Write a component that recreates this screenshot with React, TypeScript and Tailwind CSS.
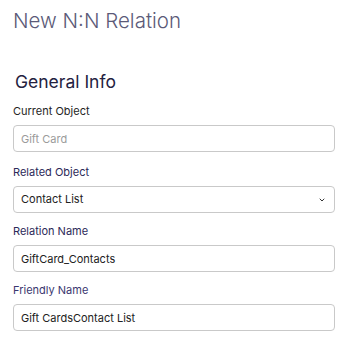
import { ChevronDown } from "lucide-react";

function Field({ label, labelColor, className = "", children }: { label: string; labelColor: string; className?: string; children: React.ReactNode }) {
  return (
    <div className={`flex flex-col ${className}`}>
      <label className={`text-[11px] leading-[14px] ${labelColor}`}>{label}</label>
      <div className="mt-[7px]">{children}</div>
    </div>
  );
}

const inputCls =
  "block w-full h-[27px] rounded-[4px] border border-[#c9c9c9] bg-white px-[7px] text-[11px] text-[#222] outline-none placeholder:text-[#9b9b9b]";

export default function App() {
  return (
    <div
      className="w-[342px] h-[339px] bg-white pl-[13px] pr-[7px] overflow-hidden"
      style={{ fontFamily: "Inter, 'Noto Sans', sans-serif" }}
    >
      <h1 className="pt-[7px] text-[20.5px] leading-[28px] font-light text-[#5b5a78]">New N:N Relation</h1>

      <h2 className="mt-[36px] pl-[2px] text-[17.5px] leading-[22px] text-[#24223f]">General Info</h2>

      <div className="mt-[11px] flex flex-col gap-[11px]">
        <Field label="Current Object" labelColor="text-[#252525]">
          <input className={inputCls} placeholder="Gift Card" readOnly />
        </Field>

        <Field label="Related Object" labelColor="text-[#2c2958]" className="mt-[2px]">
          <div className="relative">
            <select className={`${inputCls} appearance-none`} defaultValue="Contact List">
              <option>Contact List</option>
            </select>
            <ChevronDown className="absolute right-[9px] top-[10px] w-[8px] h-[8px] text-[#333]" strokeWidth={3} />
          </div>
        </Field>

        <Field label="Relation Name" labelColor="text-[#2c2958]">
          <input className={inputCls} defaultValue="GiftCard_Contacts" />
        </Field>

        <Field label="Friendly Name" labelColor="text-[#3a3770]">
          <input className={inputCls} defaultValue="Gift CardsContact List" />
        </Field>
      </div>
    </div>
  );
}
